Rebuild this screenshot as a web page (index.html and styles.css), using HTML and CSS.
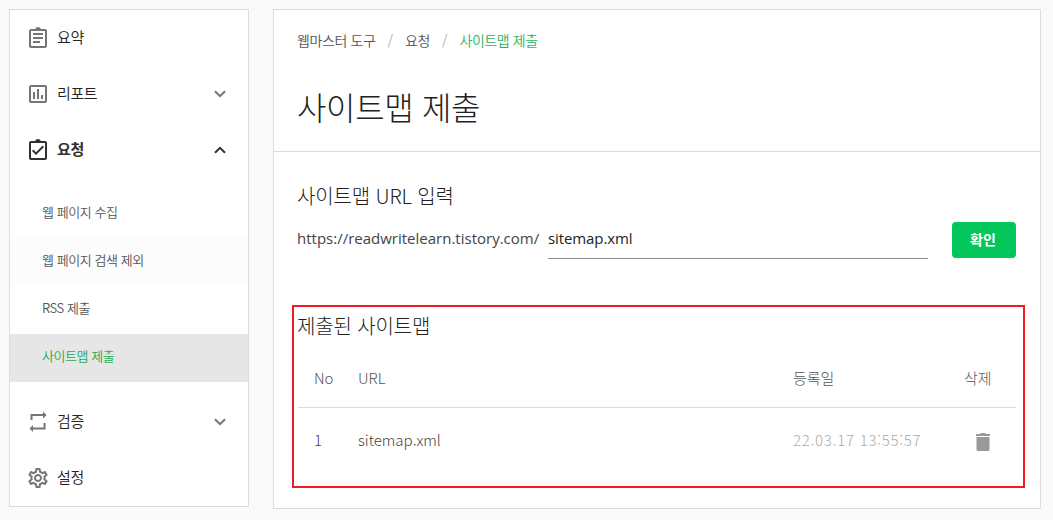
FILE: index.html
```html
<!DOCTYPE html>
<html lang="ko">
<head>
    <meta charset="UTF-8">
    <title>사이트맵 제출</title>
    <link rel="stylesheet" href="styles.css">
</head>
<body>
<div class="wrapper">
    <nav class="sidebar">
        <a class="menuItem">
            <svg class="icon" viewBox="0 0 24 24"><path d="M7 15h7v2H7zm0-4h10v2H7zm0-4h10v2H7zm12-4h-4.18C14.4 1.84 13.3 1 12 1s-2.4.84-2.82 2H5c-1.1 0-2 .9-2 2v15c0 1.1.9 2 2 2h14c1.1 0 2-.9 2-2V5c0-1.1-.9-2-2-2zm0 17H5V5h14v15z"/></svg>
            <span class="menuText">요약</span>
        </a>
        <a class="menuItem">
            <svg class="icon" viewBox="0 0 24 24"><path d="M9 17H7v-7h2v7zm4 0h-2V7h2v10zm4 0h-2v-4h2v4zm2 2.1H5V5h14v14.1zM19 3H5c-1.1 0-2 .9-2 2v14c0 1.1.9 2 2 2h14c1.1 0 2-.9 2-2V5c0-1.1-.9-2-2-2z"/></svg>
            <span class="menuText">리포트</span>
            <svg class="arrow" viewBox="0 0 12 8"><path d="M1 1.2l5 5 5-5"/></svg>
        </a>
        <a class="menuItem open">
            <svg class="icon" viewBox="0 0 24 24"><path d="M19 3h-4.18C14.4 1.84 13.3 1 12 1s-2.4.84-2.82 2H5c-1.1 0-2 .9-2 2v15c0 1.1.9 2 2 2h14c1.1 0 2-.9 2-2V5c0-1.1-.9-2-2-2zm0 17H5V5h14v15zM18 9l-1.4-1.4-6.6 6.6-2.6-2.6L6 13l4 4z"/></svg>
            <span class="menuText">요청</span>
            <svg class="arrow" viewBox="0 0 12 8"><path d="M1 6.8l5-5 5 5"/></svg>
        </a>
        <div class="subMenu">
            <a class="subItem">웹 페이지 수집</a>
            <a class="subItem hovered">웹 페이지 검색 제외</a>
            <a class="subItem">RSS 제출</a>
            <a class="subItem selected">사이트맵 제출</a>
        </div>
        <a class="menuItem">
            <svg class="icon" viewBox="0 0 24 24"><path d="M4.500 10V4H17V1.500L20.500 5 17 8.500V6H6.500v4zM19.500 13v6.500H7V22l-3.500-3.500L7 15v2.500h10.500V13z"/></svg>
            <span class="menuText">검증</span>
            <svg class="arrow" viewBox="0 0 12 8"><path d="M1 1.2l5 5 5-5"/></svg>
        </a>
        <a class="menuItem">
            <svg class="icon" viewBox="0 0 24 24"><path d="M19.43 12.98c.04-.32.07-.64.07-.98 0-.34-.03-.66-.07-.98l2.11-1.65c.19-.15.24-.42.12-.64l-2-3.46c-.09-.16-.26-.25-.44-.25-.06 0-.12.01-.17.03l-2.49 1c-.52-.4-1.08-.73-1.69-.98l-.38-2.65C14.46 2.18 14.25 2 14 2h-4c-.25 0-.46.18-.49.42l-.38 2.65c-.61.25-1.17.59-1.69.98l-2.49-1c-.06-.02-.12-.03-.18-.03-.17 0-.34.09-.43.25l-2 3.46c-.13.22-.07.49.12.64l2.11 1.65c-.04.32-.07.65-.07.98 0 .33.03.66.07.98l-2.11 1.65c-.19.15-.24.42-.12.64l2 3.46c.09.16.26.25.44.25.06 0 .12-.01.17-.03l2.49-1c.52.4 1.08.73 1.69.98l.38 2.65c.03.24.24.42.49.42h4c.25 0 .46-.18.49-.42l.38-2.65c.61-.25 1.17-.59 1.69-.98l2.49 1c.06.02.12.03.18.03.17 0 .34-.09.43-.25l2-3.46c.12-.22.07-.49-.12-.64l-2.11-1.65zm-1.98-1.71c.04.31.05.52.05.73 0 .21-.02.43-.05.73l-.14 1.13.89.7 1.08.84-.7 1.21-1.27-.51-1.04-.42-.9.68c-.43.32-.84.56-1.25.73l-1.06.43-.16 1.13-.2 1.35h-1.4l-.19-1.35-.16-1.13-1.06-.43c-.43-.18-.83-.41-1.23-.71l-.91-.7-1.06.43-1.27.51-.7-1.21 1.08-.84.89-.7-.14-1.13c-.03-.31-.05-.54-.05-.74s.02-.43.05-.73l.14-1.13-.89-.7-1.08-.84.7-1.21 1.27.51 1.04.42.9-.68c.43-.32.84-.56 1.25-.73l1.06-.43.16-1.13.2-1.35h1.39l.19 1.35.16 1.13 1.06.43c.43.18.83.41 1.23.71l.91.7 1.06-.43 1.27-.51.7 1.21-1.07.85-.89.7.14 1.13zM12 8c-2.21 0-4 1.79-4 4s1.79 4 4 4 4-1.79 4-4-1.79-4-4-4zm0 6c-1.1 0-2-.9-2-2s.9-2 2-2 2 .9 2 2-.9 2-2 2z"/></svg>
            <span class="menuText">설정</span>
        </a>
    </nav>

    <main class="content">
        <header class="pageHeader">
            <div class="breadcrumb">
                <span>웹마스터 도구</span>
                <span class="slash">/</span>
                <span>요청</span>
                <span class="slash">/</span>
                <span class="current">사이트맵 제출</span>
            </div>
            <h1 class="pageTitle">사이트맵 제출</h1>
        </header>

        <section class="submit">
            <h2 class="sectionTitle">사이트맵 URL 입력</h2>
            <div class="formRow">
                <label class="siteUrl" for="sitemapUrl">https://readwritelearn.tistory.com/</label>
                <input class="urlInput" id="sitemapUrl" type="text" value="sitemap.xml">
                <button class="button">확인</button>
            </div>
        </section>

        <section class="submitted">
            <h2 class="sectionTitle">제출된 사이트맵</h2>
            <div class="row head">
                <span>No</span>
                <span>URL</span>
                <span>등록일</span>
                <span>삭제</span>
            </div>
            <div class="row">
                <span>1</span>
                <span class="url">sitemap.xml</span>
                <span class="date">22.03.17 13:55:57</span>
                <span class="remove">
                    <svg class="trash" viewBox="0 0 14 18"><path d="M.5 4h13v12.500c0 .8-.7 1.500-1.500 1.500H2C1.200 18 .5 17.300.5 16.500zM0 1h4l1-1h4l1 1h4v2H0z"/></svg>
                </span>
            </div>
            <div class="marker"></div>
        </section>
    </main>
</div>
</body>
</html>
```
FILE: styles.css
```css
* {
    box-sizing: border-box;
}
body {
    margin: 0;
    background-color: #fafafa;
    font-family: "Noto Sans CJK KR", sans-serif;
    color: #222;
}
.wrapper {
    display: flex;
    align-items: flex-start;
    gap: 24px;
    padding: 9px 12px 11px 9px;
}
.sidebar {
    width: 240px;
    background-color: #fff;
    border: 1px solid #dcdcdc;
}
.menuItem {
    display: flex;
    align-items: center;
    height: 56px;
    padding: 0 22px 0 16px;
    font-size: 15px;
    font-weight: 350;
    letter-spacing: -0.4px;
}
.icon {
    width: 24px;
    height: 24px;
    fill: #757575;
}
.menuText {
    flex: 1;
    margin-left: 7px;
    padding-bottom: 4px;
}
.arrow {
    width: 12px;
    height: 8px;
    fill: none;
    stroke: #757575;
    stroke-width: 2;
}
.open {
    font-weight: bold;
    color: #303030;
}
.open .icon {
    fill: #303030;
}
.open .arrow {
    stroke: #303030;
}
.subMenu {
    padding: 12px 0;
}
.subItem {
    display: flex;
    align-items: center;
    height: 48px;
    padding: 0 32px 5px;
    font-size: 13px;
    font-weight: 350;
    letter-spacing: -0.45px;
    color: #555;
}
.hovered {
    background-color: #fcfcfc;
}
.selected {
    background-color: #e6e6e6;
    color: #1fab5a;
}
.content {
    width: 768px;
    height: 500px;
    background-color: #fff;
    border: 1px solid #dcdcdc;
}
.pageHeader {
    height: 142px;
    padding: 20px 23px 0;
    border-bottom: 1px solid #dcdcdc;
}
.breadcrumb {
    display: flex;
    gap: 12px;
    line-height: 21px;
    font-size: 14px;
    font-weight: 350;
    letter-spacing: -0.4px;
    color: #555;
}
.slash {
    letter-spacing: 0;
    color: #aaa;
}
.current {
    color: #1fb45a;
}
.pageTitle {
    margin: 31px 0 0;
    line-height: 48px;
    font-size: 32px;
    font-weight: 300;
    letter-spacing: -0.35px;
}
.sectionTitle {
    margin: 0 0 0 -1px;
    line-height: 30px;
    font-size: 20px;
    font-weight: 300;
    letter-spacing: -0.15px;
}
.submit {
    padding: 29px 24px 0;
}
.formRow {
    display: flex;
    align-items: flex-end;
    height: 36px;
    margin-top: 11px;
}
.siteUrl {
    width: 251px;
    margin-left: -1px;
    padding-bottom: 2px;
    line-height: 35px;
    font-family: "Open Sans", "Noto Sans CJK KR", sans-serif;
    font-size: 15px;
    color: #444;
}
.urlInput {
    width: 380px;
    height: 37px;
    margin-bottom: -1px;
    padding: 0 0 4px;
    border: 0;
    border-bottom: 1px solid #8c8c8c;
    background: none;
    font-family: "Open Sans", "Noto Sans CJK KR", sans-serif;
    font-size: 15px;
    letter-spacing: -0.1px;
    color: #222;
}
.button {
    width: 64px;
    height: 36px;
    margin-left: 24px;
    padding: 0 2px 2px 0;
    border: 0;
    border-radius: 4px;
    background-color: #03c75a;
    font-family: inherit;
    font-size: 14px;
    font-weight: bold;
    color: #fff;
}
.submitted {
    position: relative;
    margin-top: 47px;
    padding: 6px 24px 0;
}
.row {
    display: grid;
    grid-template-columns: 44px 435px 1fr 52px;
    align-items: center;
    height: 66px;
    padding: 0 0 4px 16px;
    font-size: 15px;
    font-weight: 300;
    color: #444;
}
.head {
    height: 67px;
    padding-top: 6px;
    padding-bottom: 0;
    border-bottom: 1px solid #dcdcdc;
    color: #555;
}
.date {
    letter-spacing: 0.75px;
    color: #aaa;
}
.remove {
    padding: 6px 0 0 12px;
}
.trash {
    display: block;
    width: 14px;
    height: 18px;
    fill: #999;
}
/* red frame around the submitted list */
.marker {
    position: absolute;
    top: 0;
    left: 18px;
    width: 733px;
    height: 183px;
    border: 2px solid #f01a22;
}
```
